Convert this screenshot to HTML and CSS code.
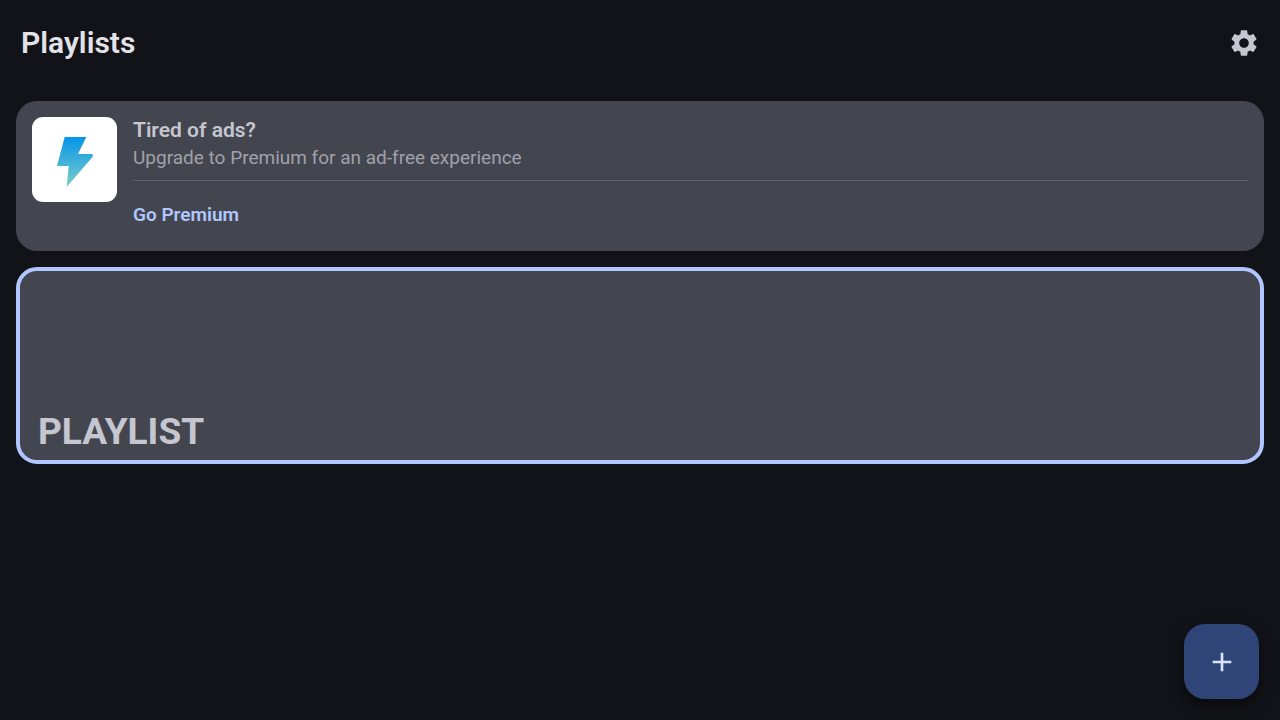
FILE: index.html
```html
<!DOCTYPE html>
<html lang="en">
<head>
    <meta charset="UTF-8">
    <meta name="viewport" content="width=device-width, initial-scale=1.0">
    <title>Playlists</title>
    <link rel="stylesheet" href="styles.css">
</head>
<body>
    <header class="top-bar">
        <h1>Playlists</h1>
        <button class="icon-button" type="button" aria-label="Settings">
            <svg viewBox="0 0 24 24" aria-hidden="true">
                <path d="M19.14 12.94c.04-.3.06-.61.06-.94 0-.32-.02-.64-.07-.94l2.03-1.58c.18-.14.23-.41.12-.61l-1.92-3.32c-.12-.22-.37-.29-.59-.22l-2.39.96c-.5-.38-1.03-.7-1.62-.94l-.36-2.54c-.04-.24-.24-.41-.48-.41h-3.84c-.24 0-.43.17-.47.41l-.36 2.54c-.59.24-1.13.57-1.62.94l-2.39-.96c-.22-.08-.47 0-.59.22L2.74 8.87c-.12.21-.08.47.12.61l2.03 1.58c-.05.3-.09.63-.09.94s.02.64.07.94l-2.03 1.58c-.18.14-.23.41-.12.61l1.92 3.32c.12.22.37.29.59.22l2.39-.96c.5.38 1.03.7 1.62.94l.36 2.54c.05.24.24.41.48.41h3.84c.24 0 .44-.17.47-.41l.36-2.54c.59-.24 1.13-.56 1.62-.94l2.39.96c.22.08.47 0 .59-.22l1.92-3.32c.12-.22.07-.47-.12-.61l-2.01-1.58zM12 15.6c-1.98 0-3.6-1.62-3.6-3.6s1.62-3.6 3.6-3.6 3.6 1.62 3.6 3.6-1.62 3.6-3.6 3.6z"/>
            </svg>
        </button>
    </header>

    <main class="content">
        <section class="promo-card">
            <div class="promo-logo">
                <svg viewBox="0 0 85 85" aria-hidden="true">
                    <defs>
                        <linearGradient id="bolt" x1="0" y1="0" x2="0" y2="1">
                            <stop offset="0" stop-color="#0694ec"/>
                            <stop offset="1" stop-color="#7bcfc6"/>
                        </linearGradient>
                    </defs>
                    <path fill="url(#bolt)" d="M32.7 20H54.3L46 37H60Q61.8 38 60.5 40L34.7 70L36.7 49H25Z"/>
                </svg>
            </div>
            <div class="promo-body">
                <h2>Tired of ads?</h2>
                <p>Upgrade to Premium for an ad-free experience</p>
                <hr>
                <button class="text-button" type="button">Go Premium</button>
            </div>
        </section>

        <button class="playlist-card" type="button">PLAYLIST</button>
    </main>

    <button class="fab" type="button" aria-label="Add playlist">
        <svg viewBox="0 0 24 24" aria-hidden="true">
            <path d="M19 13h-6v6h-2v-6H5v-2h6V5h2v6h6v2z"/>
        </svg>
    </button>
</body>
</html>
```
FILE: styles.css
```css
:root {
    --color-bg: #121318;
    --color-text: #e3e2e9;
    --color-card: #44464f;
    --color-card-text: #c5c6d0;
    --color-muted: #a0a1aa;
    --color-primary: #b0c6ff;
    --color-fab: #2f4578;
    --color-fab-icon: #d9e2ff;
}

* {
    box-sizing: border-box;
}

body {
    margin: 0;
    min-height: 100vh;
    background: var(--color-bg);
    color: var(--color-text);
    font-family: Roboto, sans-serif;
}

button {
    border: 0;
    background: none;
    font-family: inherit;
    cursor: pointer;
}

.top-bar {
    display: flex;
    align-items: center;
    justify-content: space-between;
    height: 85px;
    padding: 0 20px 0 21px;
}

.top-bar h1 {
    margin: 0;
    font-size: 30px;
    font-weight: 600;
    line-height: 32px;
}

.icon-button {
    display: flex;
    padding: 0;
}

.icon-button svg {
    width: 32px;
    height: 32px;
    fill: var(--color-card-text);
}

.content {
    display: flex;
    flex-direction: column;
    gap: 16px;
    padding: 16px;
}

.promo-card {
    display: flex;
    align-items: flex-start;
    gap: 16px;
    padding: 16px;
    border-radius: 21px;
    background: var(--color-card);
}

.promo-logo {
    flex: none;
    width: 85px;
    height: 85px;
    border-radius: 11px;
    background: #fff;
}

.promo-logo svg {
    display: block;
}

.promo-body {
    flex: 1;
}

.promo-body h2 {
    margin: 0;
    color: var(--color-card-text);
    font-size: 21px;
    font-weight: 600;
    line-height: 26px;
}

.promo-body p {
    margin: 0;
    color: var(--color-muted);
    font-size: 19px;
    line-height: 29px;
}

.promo-body hr {
    height: 1px;
    margin: 8px 0;
    border: 0;
    background: #5e6069;
}

.text-button {
    display: block;
    padding: 6px 0 0;
    color: var(--color-primary);
    font-size: 19px;
    font-weight: 600;
    line-height: 40px;
}

.playlist-card {
    display: flex;
    align-items: flex-end;
    width: 100%;
    min-height: 197px;
    padding: 6px 18px;
    border: 4px solid var(--color-primary);
    border-radius: 21px;
    background: var(--color-card);
    color: var(--color-card-text);
    font-size: 37px;
    font-weight: 700;
    line-height: 44px;
}

.fab {
    position: fixed;
    right: 21px;
    bottom: 21px;
    display: flex;
    align-items: center;
    justify-content: center;
    width: 75px;
    height: 75px;
    padding: 0;
    border-radius: 21px;
    background: var(--color-fab);
    box-shadow: 0 6px 14px rgba(0, 0, 0, 0.5);
}

.fab svg {
    width: 32px;
    height: 32px;
    fill: var(--color-fab-icon);
}
```
